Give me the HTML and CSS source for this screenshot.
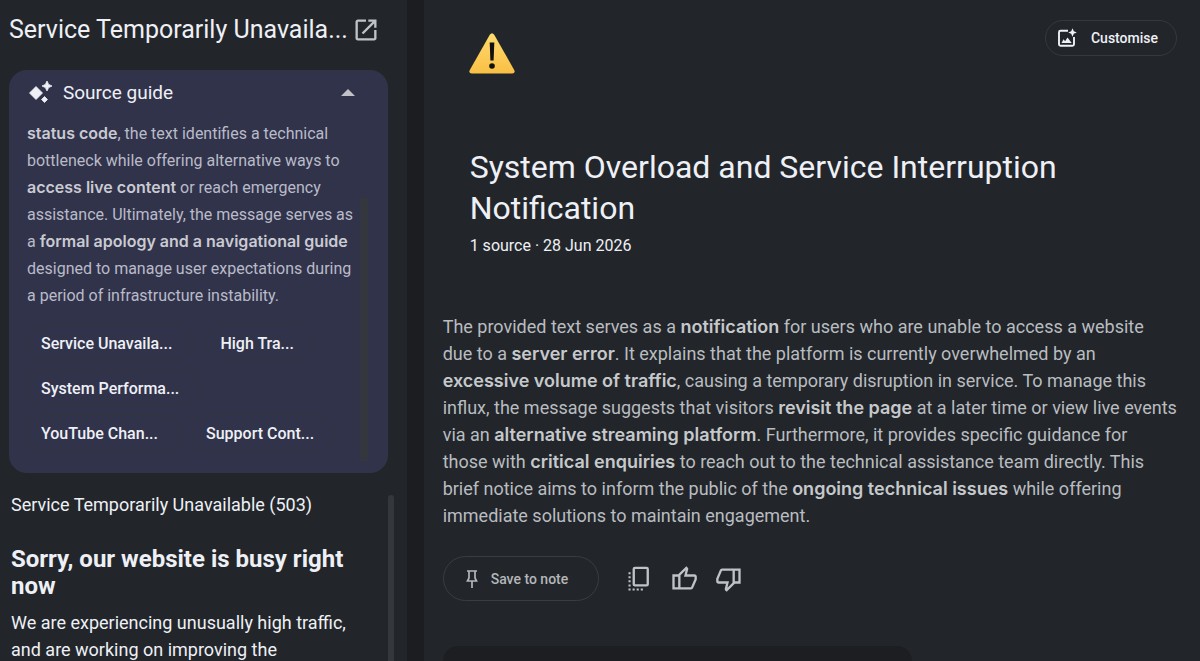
FILE: index.html
```html
<!DOCTYPE html>
<html lang="en-GB">
<head>
<meta charset="utf-8">
<title>System Overload and Service Interruption Notification</title>
<link rel="stylesheet" href="styles.css">
</head>
<body>
<aside class="source">
  <header class="source-head">
    <h2 class="source-title">Service Temporarily Unavaila...</h2>
    <button class="icon-btn" aria-label="Open source in new tab">
      <svg class="icon" viewBox="0 -960 960 960"><path d="M200-120q-33 0-56.500-23.500T120-200v-560q0-33 23.500-56.500T200-840h280v80H200v560h560v-280h80v280q0 33-23.500 56.500T760-120H200Zm188-212-56-56 372-372H560v-80h280v280h-80v-144L388-332Z"/></svg>
    </button>
  </header>

  <section class="guide">
    <div class="guide-head">
      <svg class="spark" viewBox="0 0 24 24"><path d="M8 5.500 14.500 12 8 18.500 1.500 12Z M19 0l1.600 3.400L24 5l-3.400 1.600L19 10l-1.600-3.400L14 5l3.400-1.600Z M16.500 15.500l3 3-3 3-3-3Z" stroke="currentColor" stroke-width=".8" stroke-linejoin="round"/></svg>
      <h3 class="guide-title">Source guide</h3>
      <button class="icon-btn" aria-label="Collapse source guide">
        <svg class="caret" viewBox="0 0 14 7"><path d="M0 7 7 0l7 7Z"/></svg>
      </button>
    </div>
    <div class="guide-body">
      <div class="guide-content">
        <p class="guide-text"><b>status code</b>, the text identifies a technical<br>bottleneck while offering alternative ways to<br><b>access live content</b> or reach emergency<br>assistance. Ultimately, the message serves as<br>a <b>formal apology and a navigational guide</b><br>designed to manage user expectations during<br>a period of infrastructure instability.</p>
        <div class="chips">
          <div class="chip-row"><button class="chip">Service Unavaila...</button><button class="chip">High Tra...</button></div>
          <div class="chip-row"><button class="chip">System Performa...</button></div>
          <div class="chip-row"><button class="chip">YouTube Chan...</button><button class="chip">Support Cont...</button></div>
        </div>
      </div>
      <div class="guide-scroll"></div>
    </div>
  </section>

  <div class="document">
    <div class="document-text">
      <p>Service Temporarily Unavailable (503)</p>
      <h1>Sorry, our website is busy right<br>now</h1>
      <p>We are experiencing unusually high traffic,<br>and are working on improving the</p>
    </div>
    <div class="document-scroll"></div>
  </div>
</aside>

<main class="chat">
  <div class="chat-top">
    <svg class="warning" viewBox="0 0 46 41">
      <defs><linearGradient id="amber" x1="0" y1="0" x2="0" y2="1"><stop offset="0" stop-color="#ffdc6e"/><stop offset="1" stop-color="#f9bf45"/></linearGradient></defs>
      <path d="M20.800 1.800q2.200-3.200 4.400 0L45.200 37q1.500 3.500-2 3.500H2.800q-3.500 0-2-3.500Z" fill="url(#amber)"/>
      <path d="M20.700 9.500h4.600l-.7 18h-3.200Z" fill="#111"/><circle cx="23" cy="33" r="2.800" fill="#111"/>
    </svg>
    <button class="customise">
      <svg class="customise-icon" viewBox="0 0 20 20"><path class="stroke" d="M11 2.700H3.500q-1.500 0-1.500 1.500v12q0 1.500 1.500 1.500h12q1.500 0 1.500-1.500V9" stroke-width="1.900"/><path d="M4.500 15l2-3.800 1.600 2 2.400-3.700 4.200 5.500Z M15.500.2l1.300 3 3 1.300-3 1.300-1.300 3-1.300-3-3-1.300 3-1.300Z"/></svg>
      Customise
    </button>
  </div>

  <div class="chat-title">
    <h1>System Overload and Service Interruption<br>Notification</h1>
    <p>1 source · 28 Jun 2026</p>
  </div>

  <p class="summary">The provided text serves as a <b>notification</b> for users who are unable to access a website<br>due to a <b>server error</b>. It explains that the platform is currently overwhelmed by an<br><b>excessive volume of traffic</b>, causing a temporary disruption in service. To manage this<br>influx, the message suggests that visitors <b>revisit the page</b> at a later time or view live events<br>via an <b>alternative streaming platform</b>. Furthermore, it provides specific guidance for<br>those with <b>critical enquiries</b> to reach out to the technical assistance team directly. This<br>brief notice aims to inform the public of the <b>ongoing technical issues</b> while offering<br>immediate solutions to maintain engagement.</p>

  <div class="actions">
    <button class="save">
      <svg class="pin" viewBox="0 0 12 18"><path class="stroke" d="M1 1h10M3 1v7L1.500 11h9L9 8V1M6 11v7" stroke-width="1.700"/></svg>
      Save to note
    </button>
    <button class="icon-btn" aria-label="Copy">
      <svg class="icon" viewBox="0 0 24 24"><path class="stroke" d="M8.500 2.500h10q1 0 1 1v13q0 1-1 1h-10q-1 0-1-1v-13q0-1 1-1Z" stroke-width="2"/><path class="stroke" d="M3 7h1.800M3 10.500h1.800M3 14h1.800M3 17.500h1.800M3 21h1.800M6.500 21h1.800M10 21h1.800M13.500 21h1.800" stroke-width="1.700"/></svg>
    </button>
    <button class="icon-btn" aria-label="Good response">
      <svg class="icon" viewBox="0 -960 960 960"><path d="M720-120H280v-520l280-280 50 50q7 7 11.500 19t4.500 23v14l-44 174h258q32 0 56 24t24 56v80q0 7-2 15t-4 15L794-168q-9 20-30 34t-44 14Zm-360-80h360l120-280v-80H480l54-220-174 174v406Zm0-406v406-406Zm-80-34v80H160v360h120v80H80v-520h200Z"/></svg>
    </button>
    <button class="icon-btn" aria-label="Bad response">
      <svg class="icon" viewBox="0 -960 960 960"><path d="M240-840h440v520L400-40l-50-50q-7-7-11.500-19t-4.500-23v-14l44-174H120q-32 0-56-24t-24-56v-80q0-7 2-15t4-15l120-282q9-20 30-34t44-14Zm360 80H240L120-480v80h360l-54 220 174-174v-406Zm0 406v-406 406Zm80 34v-80h120v-360H680v-80h200v520H680Z"/></svg>
    </button>
  </div>

  <div class="composer"></div>
</main>
</body>
</html>
```
FILE: styles.css
```css
* { box-sizing: border-box; }

body {
  margin: 0;
  height: 100vh;
  overflow: hidden;
  display: grid;
  grid-template-columns: 11fr 21fr;
  column-gap: 17px;
  background: #1c1d20;
  color: #eef0f6;
  font-family: Roboto, "Liberation Sans", sans-serif;
}

h1, h2, h3, p { margin: 0; font-weight: 400; }
b { font-family: Inter, Roboto, sans-serif; font-weight: 600; }
svg { display: block; fill: currentColor; }
.stroke { fill: none; stroke: currentColor; }

button {
  font: inherit;
  color: inherit;
  background: none;
  border: 0;
  padding: 0;
}

.icon { width: 28px; height: 28px; }
.icon-btn { color: #c0c2c7; }

.source {
  background: #22262a;
  overflow: hidden;
  display: flex;
  flex-direction: column;
}

.source-head {
  display: flex;
  align-items: center;
  justify-content: space-between;
  height: 70px;
  padding: 0 27px 11px 9px;
  flex: none;
}

.source-title { font-size: 25px; line-height: 32px; white-space: nowrap; }

.guide {
  flex: none;
  margin: 0 19px 0 9px;
  padding: 0 18px 12px;
  border-radius: 18px;
  background: #31334b;
}

.guide-head {
  display: flex;
  align-items: center;
  height: 45px;
  padding-right: 15px;
}

.spark { width: 24px; height: 24px; margin: 0 11px 0 1px; }
.guide-title { flex: 1; font-size: 19px; line-height: 24px; }
.caret { width: 14px; height: 7px; }

.guide-body { display: flex; justify-content: space-between; padding-top: 5px; }
.guide-content { white-space: nowrap; }
.guide-text { font-size: 16px; line-height: 27px; color: #b9bbc8; }
.guide-text b { font-size: 16px; line-height: 1; color: #c9cad2; }
.guide-scroll { width: 8px; margin: 78px 2px 0 0; background: #35373f; }

.chips { display: flex; flex-direction: column; gap: 9px; padding: 16px 0 10px; }
.chip-row { display: flex; gap: 13px; }
.chip {
  height: 36px;
  padding: 0 20px 0 13px;
  border: 1px solid #33353f;
  border-radius: 18px;
  font-size: 16px;
  font-weight: 500;
}

.document { flex: 1; display: flex; justify-content: space-between; padding: 0 13px 0 11px; }
.document-text { padding-top: 18px; white-space: nowrap; font-size: 18px; line-height: 27px; }
.document-text h1 { margin: 28px 0 9px; font-size: 24px; line-height: 27px; font-weight: 700; }
.document-scroll { width: 6px; margin-top: 22px; border-radius: 3px 3px 0 0; background: #34383c; }

.chat {
  background: #22262a;
  overflow: hidden;
  display: flex;
  flex-direction: column;
  padding: 20px 0 0 19px;
}

.chat-top {
  display: flex;
  align-items: flex-start;
  justify-content: space-between;
  padding: 0 23px 0 26px;
}

.warning { width: 46px; height: 41px; margin-top: 13px; }

.customise {
  display: flex;
  align-items: center;
  gap: 14px;
  height: 36px;
  padding: 0 18px 0 11px;
  border: 1px solid #35393e;
  border-radius: 18px;
  font-size: 14px;
  font-weight: 500;
}

.customise-icon { width: 20px; height: 20px; }

.chat-title { padding: 73px 0 0 27px; white-space: nowrap; }
.chat-title h1 { font-size: 32px; line-height: 41px; }
.chat-title p { margin-top: 5px; font-size: 16px; line-height: 24px; }

.summary { margin-top: 55px; font-size: 18px; line-height: 27px; color: #b9bcc0; white-space: nowrap; }
.summary b { font-size: 18px; line-height: 1; color: #c6c9cc; }

.actions { display: flex; align-items: center; gap: 17px; margin-top: 27px; }

.save {
  display: flex;
  align-items: center;
  gap: 13px;
  height: 45px;
  margin-right: 9px;
  padding: 0 30px 0 22px;
  border: 1px solid #393d41;
  border-radius: 23px;
  color: #b4b6ba;
  font-size: 14px;
  font-weight: 500;
}

.pin { width: 12px; height: 18px; }

.composer {
  flex: 1 0 14px;
  width: 62%;
  margin-top: 45px;
  border-radius: 18px 18px 0 0;
  background: #1d1e21;
}
```
